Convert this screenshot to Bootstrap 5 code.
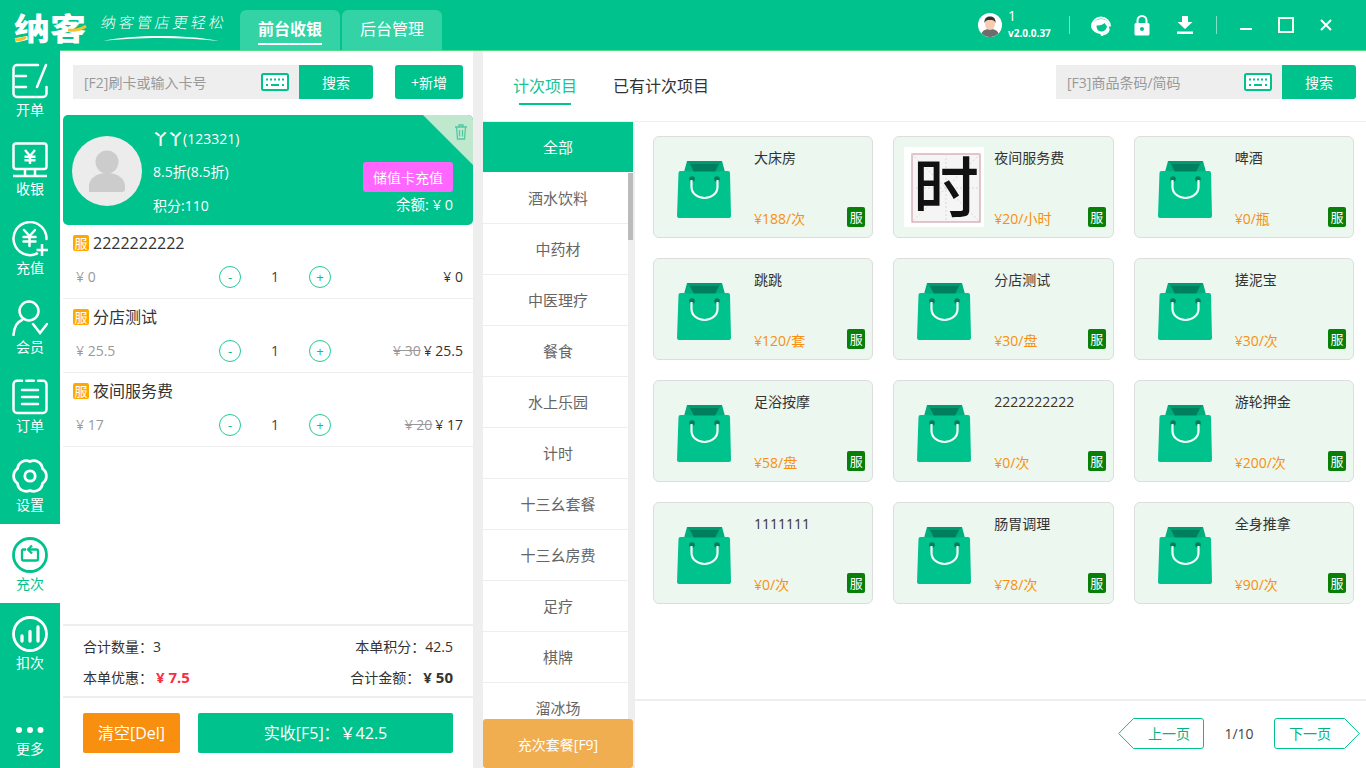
<!DOCTYPE html>
<html lang="zh">
<head>
<meta charset="utf-8">
<title>纳客</title>
<link href="https://cdn.jsdelivr.net/npm/bootstrap@5.3.0/dist/css/bootstrap.min.css" rel="stylesheet">
<style>
:root{--g:#00c28c;}
html,body{height:768px;overflow:hidden;}
body{font-family:"Open Sans","Noto Sans CJK SC",sans-serif;font-size:14px;color:#333;background:#fff;}
.top-bar{height:51px;background:var(--g);border-bottom:1px solid #4fdc8e;color:#fff;}
.brand{width:240px;height:50px;position:relative;}
.brand-name{position:absolute;left:14px;top:6px;font-size:36px;line-height:40px;font-weight:900;color:#fff;transform:scaleY(.86);transform-origin:50% 100%;}
.brand-accent{position:absolute;left:14px;top:24px;}
.brand-slogan{position:absolute;left:101px;top:11px;font-size:15px;line-height:22px;letter-spacing:3px;transform:skewX(-10deg);font-weight:300;white-space:nowrap;}
.brand-curve{position:absolute;left:102px;top:34px;}
.top-tab{width:100px;height:40px;margin-top:10px;margin-right:2px;background:#33d3a5;border-radius:6px 6px 0 0;font-size:16px;text-align:center;line-height:38px;color:#fff;}
.top-tab span{display:inline-block;height:35px;}
.top-tab.on span{font-weight:700;border-bottom:2px solid #fff;}
.user-box{margin-left:auto;}
.u-avatar{width:24px;height:24px;margin-right:6px;}
.u-name{width:61px;line-height:1;}
.u-name b{display:block;font-weight:400;font-size:14px;margin-bottom:5px;margin-top:-4px;}
.u-name i{display:block;font-style:normal;font-weight:700;font-size:10px;}
.v-sep{width:1px;height:18px;background:#7fe0c5;}
.t-ico{width:22px;height:22px;display:block;}
.i-head{margin-left:20px;}
.i-lock{margin-left:19px;}
.i-down{margin-left:21px;}
.sep2{margin-left:20px;}
.i-min{margin-left:23px;margin-top:7px;}
.i-max{margin-left:26px;}
.i-close{margin-left:26px;margin-right:34px;}
.side{width:60px;background:var(--g);color:#fff;margin-top:-1px;position:relative;}
.side-item{height:79px;padding-top:13px;text-align:center;line-height:20px;font-size:14px;}
.side-item svg{display:block;margin:0 auto 1px;width:36px;height:36px;}
.side-item.on{background:#fff;color:var(--g);}
.side-more{height:60px;margin-top:auto;padding-top:16px;text-align:center;line-height:20px;}
.side-more svg{display:block;margin:0 auto 3px;width:32px;height:12px;}
.work{height:717px;}
.left-pane{width:410px;margin-left:3px;background:#fff;}
.search-wrap{height:34px;margin:14px 10px 0;}
.search-box{width:300px;height:34px;}
.search-field{flex:1;background:#eee;height:34px;padding:0 10px 0 11px;}
.search-field input{flex:1;min-width:0;border:0;outline:0;background:transparent;font-size:14px;color:#888;padding:0;}
.search-field input::placeholder{color:#999;opacity:1;}
.kb{width:28px;height:18px;flex:none;}
.g-btn{background:var(--g);color:#fff;font-size:14px;border:0;border-radius:0 3px 3px 0;width:74px;height:34px;padding:0;}
.add-btn{width:68px;border-radius:3px;}
.mem-card{height:110px;margin-top:16px;background:var(--g);border-radius:5px;color:#fff;position:relative;overflow:hidden;padding:0 20px 0 9px;}
.mem-photo{width:70px;height:70px;flex:none;margin-top:21px;margin-right:11px;}
.mem-info{padding-top:12px;line-height:22px;}
.mem-info div{height:34px;}
.mem-name b{font-size:15px;font-weight:700;}
.mem-right{margin-left:auto;padding-top:47px;text-align:right;}
.pink-btn{width:90px;height:30px;background:#ff66ff;color:#fff;border:0;border-radius:3px;padding:0;font-size:14px;display:block;}
.mem-bal{margin-top:3px;line-height:20px;font-size:14.5px;}
.corner{position:absolute;right:0;top:0;width:50px;height:50px;background:#bfe8cf;clip-path:polygon(0 0,100% 0,100% 100%);}
.corner svg{position:absolute;right:5px;top:9px;width:14px;height:16px;}
.ord-row{height:74px;border-bottom:1px solid #eee;padding:8px 10px 0;}
.ord-title{height:20px;line-height:20px;font-size:16px;color:#333;}
.fu-tag{width:16px;height:16px;background:#ffa800;color:#fff;font-size:13px;line-height:16px;text-align:center;border-radius:2px;margin-right:4px;flex:none;}
.ord-line{height:22px;margin-top:13px;line-height:22px;}
.ord-price{width:146px;padding-left:3px;color:#999;}
.rnd{width:22px;height:22px;border:1px solid #1fcb9b;border-radius:50%;color:#00c28c;font-size:13px;line-height:19px;text-align:center;background:#fff;padding:0;flex:none;}
.ord-qty{width:68px;text-align:center;color:#444;}
.ord-total{margin-left:auto;color:#333;}
.ord-total s{color:#999;margin-right:3px;}
.sum-box{height:72px;border-top:2px solid #eee;padding:11px 20px 0;}
.sum-line{height:20px;line-height:20px;margin-bottom:10px;}
.sum-red{color:#f5303f;font-weight:700;margin-left:3px;font-size:15px;}
.sum-bold{font-weight:700;font-size:15px;color:#333;margin-left:3px;}
.act-box{height:72px;border-top:2px solid #eee;padding:15px 20px 15px;}
.act-clear{width:97px;height:40px;background:#f98f0f;color:#fff;font-size:16px;border:0;border-radius:2px;padding:0;}
.act-pay{width:255px;height:40px;margin-left:18px;background:var(--g);color:#fff;font-size:16px;border:0;border-radius:2px;padding:0;}
.gutter{width:10px;background:#eee;}
.right-pane{flex:1;min-width:0;background:#fff;}
.r-head{height:71px;border-bottom:1px solid #eee;padding:0 10px 0 30px;}
.r-tab{font-size:16px;line-height:20px;padding-top:25px;margin-right:36px;color:#333;position:relative;}
.r-tab.on{color:#16c496;}
.r-tab.on::after{content:"";display:block;width:52px;height:2px;margin:7px auto 0;background:var(--g);}
.r-search{margin-top:14px;margin-left:auto;}
.r-body{height:646px;}
.cat-col{width:150px;}
.cat-first{height:50px;background:var(--g);color:#fff;font-size:15px;line-height:50px;text-align:center;}
.cat-scroll{height:547px;margin-top:1px;overflow:hidden;}
.cat-list{width:145px;}
.cat-item{height:51px;line-height:50px;text-align:center;font-size:15px;color:#666;border-bottom:1px solid #eee;flex:none;padding-left:5px;}
.cat-track{width:5px;background:#eee;}
.cat-thumb{height:67px;background:#bbb;}
.cat-foot{height:49px;background:#f0ae50;color:#fff;font-size:14px;line-height:52px;text-align:center;border-radius:3px;border:0;padding:0;}
.gut2{width:2px;background:#eee;}
.goods-col{flex:1;min-width:0;}
.goods-grid{display:grid;grid-template-columns:repeat(3,1fr);grid-auto-rows:102px;gap:20px;padding:14px 12px 0 18px;flex:1;align-content:start;}
.goods{border:1px solid #ddd;border-radius:6px;background:#ebf7ef;display:flex;}
.goods-pic{width:100px;flex:none;padding:23px 0 0 23px;}
.goods-pic svg{display:block;overflow:visible;}
.goods-pic.stamp{padding:10px 0 0 10px;}
.goods-txt{flex:1;min-width:0;padding:11px 7px 10px 0;display:flex;flex-direction:column;}
.goods-name{height:20px;line-height:20px;font-size:14px;color:#333;}
.goods-foot{height:20px;margin-top:auto;}
.goods-price{color:#f98f0f;font-size:14px;line-height:24px;}
.fu-green{width:18px;height:20px;background:#088008;color:#fff;font-size:13px;line-height:20px;text-align:center;border-radius:2px;}
.pager-bar{height:69px;border-top:2px solid #eee;padding:17px 6px 0 0;}
.pg-btn{width:86px;height:31px;position:relative;background:transparent;border:0;padding:0;color:#00b586;font-size:14px;}
.pg-btn svg{position:absolute;left:0;top:0;}
.pg-btn span{position:relative;}
.pg-next span{padding-right:14px;}
.pg-num{width:70px;text-align:center;line-height:31px;color:#444;font-size:14px;}
</style>
</head>
<body>
<svg width="0" height="0" class="position-absolute">
  <defs>
    <symbol id="bag" viewBox="0 0 54 58">
      <path d="M10 1H45L48 12H7Z" fill="#00ad7d"/>
      <path d="M13 4H42L38 12H17Z" fill="#007f5f"/>
      <path d="M10 1H45L42 4H13Z" fill="#009a70"/>
      <path d="M7 11L17 11.500H38L48 11L51 11A2 2 0 0 1 53 13L54 56A2 2 0 0 1 52 58H2A2 2 0 0 1 0 56L1.500 13A2 2 0 0 1 3.500 11Z" fill="#00c28c"/>
      <circle cx="15" cy="19" r="2.800" fill="#007f5f"/><circle cx="40" cy="19" r="2.800" fill="#007f5f"/>
      <path d="M14.500 20V27A13 11 0 0 0 40.500 27V20" fill="none" stroke="#f2fdf8" stroke-width="2.200"/>
    </symbol>
    <symbol id="kbd" viewBox="0 0 28 18">
      <rect x="1" y="1" width="26" height="16" rx="1.500" fill="#fff" stroke="#00c28c" stroke-width="2"/>
      <path d="M5 6.500H7M9 6.500H11M13 6.500H15M17 6.500H19M21 6.500H23M5 12H7M10 12H18M21 12H23" stroke="#00c28c" stroke-width="2"/>
    </symbol>
    <symbol id="mem" viewBox="0 0 70 70">
      <circle cx="35" cy="35" r="35" fill="#ececec"/>
      <circle cx="35" cy="26" r="11.500" fill="#ccc"/>
      <path d="M17 56V50C17 43 24 37 35 37S53 43 53 50V53A3 3 0 0 1 50 56Z" fill="#ccc"/>
    </symbol>
    <symbol id="pgl" viewBox="0 0 86 31"><path d="M15.500 .5H83A2.500 2.500 0 0 1 85.500 3V28A2.500 2.500 0 0 1 83 30.500H15.500L.7 15.500Z" fill="#fff" stroke="#00c28c"/></symbol>
    <symbol id="pgr" viewBox="0 0 86 31"><path d="M70.500 .5H3A2.500 2.500 0 0 0 .5 3V28A2.500 2.500 0 0 0 3 30.500H70.500L85.300 15.500Z" fill="#fff" stroke="#00c28c"/></symbol>
  </defs>
</svg>

<header class="top-bar d-flex">
  <div class="brand">
    <div class="brand-name">纳客</div>
    <svg class="brand-accent" width="74" height="20" viewBox="0 0 74 20"><path d="M1 16C5 16 9 15 12 13" stroke="#fbc02d" stroke-width="3" fill="none"/><path d="M54 6C60 7 66 6 72 2" stroke="#fbc02d" stroke-width="3" fill="none"/></svg>
    <div class="brand-slogan">纳客管店更轻松</div>
    <svg class="brand-curve" width="118" height="8" viewBox="0 0 118 8"><path d="M1 7C30 1 80 0 117 7C80 3 35 3 1 7Z" fill="#fff"/></svg>
  </div>
  <div class="top-tab on"><span>前台收银</span></div>
  <div class="top-tab"><span>后台管理</span></div>
  <div class="user-box d-flex align-items-center">
    <svg class="u-avatar" viewBox="0 0 24 24"><circle cx="12" cy="12" r="12" fill="#fff"/><path d="M3.500 20.500C5 17 8 16 12 16S19 17 20.500 20.500A12 12 0 0 1 3.500 20.500Z" fill="#6d6d6d"/><ellipse cx="12" cy="11" rx="5" ry="6" fill="#f6cdb0"/><path d="M6.500 10C6 5 9 3.500 12 3.500S18 5 17.500 10C16.500 7.500 15 7 12 7S7.500 7.500 6.500 10Z" fill="#333"/></svg>
    <div class="u-name"><b>1</b><i>v2.0.0.37</i></div>
    <div class="v-sep"></div>
    <svg class="t-ico i-head" viewBox="0 0 22 22"><path d="M2 12.500A9 9 0 0 1 20 12.500" fill="none" stroke="#fff" stroke-width="2"/><path d="M1 12C1 11 5 5 11 5S19 9 19 12V14C19 18 15 20 11 20C6 20 1 16 1 12Z" fill="#fff"/><path d="M6.500 11.500C10 12 13 10.500 14.500 9C15.500 10.500 16.500 11.500 17 12.500C16.500 15.500 14 17.500 11 17.500C8 17.500 6.500 14.500 6.500 11.500Z" fill="#00c28c"/><path d="M19 14.500C19 18 16 20 13 20.500" fill="none" stroke="#fff" stroke-width="1.500"/><circle cx="12" cy="20.500" r="1.500" fill="#fff"/></svg>
    <svg class="t-ico i-lock" viewBox="0 0 22 22"><path d="M6.500 10V6.500A4.500 4.500 0 0 1 15.500 6.500V10" fill="none" stroke="#fff" stroke-width="2"/><rect x="3.500" y="9" width="15" height="12.500" rx="1.500" fill="#fff"/><circle cx="11" cy="15" r="2" fill="#00c28c"/></svg>
    <svg class="t-ico i-down" viewBox="0 0 22 22"><path d="M8 2H14V8H18.500L11 15 3.500 8H8Z" fill="#fff"/><rect x="3" y="17.500" width="16" height="2.500" fill="#fff"/></svg>
    <div class="v-sep sep2"></div>
    <svg class="i-min" width="12" height="2"><rect width="12" height="2" fill="#fff"/></svg>
    <svg class="i-max" width="16" height="16"><rect x="1" y="1" width="14" height="14" fill="none" stroke="#f4fbe9" stroke-width="2"/></svg>
    <svg class="i-close" width="12" height="12"><path d="M1 1L11 11M11 1L1 11" stroke="#fff" stroke-width="2"/></svg>
  </div>
</header>

<div class="work d-flex">
  <nav class="side d-flex flex-column">
    <div class="side-item">
      <svg viewBox="0 0 36 36" fill="none" stroke="#fff" stroke-width="2.500" stroke-linecap="round"><path d="M26 2H5A3.500 3.500 0 0 0 1.500 5.500V30.500A3.500 3.500 0 0 0 5 34H31A3.500 3.500 0 0 0 34.500 30.500V24"/><path d="M4 13H14M4 24H14M34 2L25 24"/></svg>开单
    </div>
    <div class="side-item">
      <svg viewBox="0 0 36 36" fill="none" stroke="#fff" stroke-width="2.500"><rect x="1.500" y="1.500" width="33" height="25.500" rx="2.500"/><path d="M1 34H35M13 27V34M23 27V34"/><path d="M13 8L18 14L23 8M12.500 14.800H23.500M12.500 18.300H23.500M18 14V22" stroke-width="2.400"/></svg>收银
    </div>
    <div class="side-item">
      <svg viewBox="0 0 36 36" fill="none" stroke="#fff" stroke-width="2.500" stroke-linecap="round"><path d="M25 32.500A16.500 16.500 0 1 1 34.500 18"/><path d="M12 9L17.500 15L23 9M11.500 16H23.500M11.500 20.500H23.500M17.500 15V25" stroke-width="2.500"/><path d="M24.500 29H36M30 23V35" stroke-linecap="butt"/></svg>充值
    </div>
    <div class="side-item">
      <svg viewBox="0 0 36 36" fill="none" stroke="#fff" stroke-width="2.500" stroke-linecap="round"><circle cx="17" cy="11" r="9.500"/><path d="M1.500 35C2 27 5 22 10 20M21 24L28 33L35 24"/></svg>会员
    </div>
    <div class="side-item">
      <svg viewBox="0 0 36 36" fill="none" stroke="#fff" stroke-width="2.500" stroke-linecap="round"><path d="M10 1.800H5A3.500 3.500 0 0 0 1.500 5.300V30.500A3.500 3.500 0 0 0 5 34H31A3.500 3.500 0 0 0 34.500 30.500V5.300A3.500 3.500 0 0 0 31 1.800H26"/><rect x="13" y=".5" width="10" height="2.500" rx="1.200" fill="#fff" stroke="none"/><path d="M10 11H26M10 18H26M10 25H26"/></svg>订单
    </div>
    <div class="side-item">
      <svg viewBox="0 0 36 36" fill="none" stroke="#fff" stroke-width="2.800" stroke-linejoin="round"><path d="M18 3.500A8.800 8.800 0 0 1 30.500 10.700A8.800 8.800 0 0 1 30.500 25.300A8.800 8.800 0 0 1 18 32.500A8.800 8.800 0 0 1 5.500 25.300A8.800 8.800 0 0 1 5.500 10.700A8.800 8.800 0 0 1 18 3.500Z"/><circle cx="18" cy="18" r="5.200"/></svg>设置
    </div>
    <div class="side-item on">
      <svg viewBox="0 0 36 36" fill="none" stroke="#00c28c" stroke-width="2.800"><circle cx="18" cy="18" r="16.500"/><path d="M14 12.500H11.500A1.500 1.500 0 0 0 10 14V22A1.500 1.500 0 0 0 11.500 23.500H24.500A1.500 1.500 0 0 0 26 22V14A1.500 1.500 0 0 0 24.500 12.500H17" stroke-width="2.300"/><path d="M20 8.500L16 12.500L20 16.500" stroke-width="2.300"/></svg>充次
    </div>
    <div class="side-item">
      <svg viewBox="0 0 36 36" fill="none" stroke="#fff" stroke-width="2.800"><circle cx="18" cy="18" r="16.500"/><path d="M10 20V25M18 15.500V25M26 11V25" stroke-width="3.300" stroke-linecap="round"/></svg>扣次
    </div>
    <div class="side-more">
      <svg viewBox="0 0 32 12" fill="#fff"><circle cx="5" cy="6" r="3"/><circle cx="16" cy="6" r="3"/><circle cx="26.500" cy="6" r="3"/></svg>更多
    </div>
  </nav>

  <section class="left-pane d-flex flex-column">
    <div class="search-wrap d-flex justify-content-between">
      <div class="search-box d-flex">
        <div class="search-field d-flex align-items-center"><input type="text" placeholder="[F2]刷卡或输入卡号"><svg class="kb"><use href="#kbd"/></svg></div>
        <button class="g-btn">搜索</button>
      </div>
      <button class="g-btn add-btn">+新增</button>
    </div>

    <div class="mem-card d-flex">
      <svg class="mem-photo"><use href="#mem"/></svg>
      <div class="mem-info">
        <div class="mem-name"><b>丫丫</b>(123321)</div>
        <div>8.5折(8.5折)</div>
        <div>积分:110</div>
      </div>
      <div class="mem-right">
        <button class="pink-btn">储值卡充值</button>
        <div class="mem-bal">余额: ¥ 0</div>
      </div>
      <div class="corner"><svg viewBox="0 0 14 16" fill="none" stroke="#52c9a0" stroke-width="1.300"><path d="M1 3H13M5 3V1H9V3M2.500 3L3.500 15H10.500L11.500 3M5.500 6V12.500M8.500 6V12.500"/></svg></div>
    </div>

    <div class="ord-row">
      <div class="ord-title d-flex align-items-center"><span class="fu-tag">服</span>2222222222</div>
      <div class="ord-line d-flex"><span class="ord-price">¥ 0</span><button class="rnd">-</button><span class="ord-qty">1</span><button class="rnd">+</button><span class="ord-total">¥ 0</span></div>
    </div>
    <div class="ord-row">
      <div class="ord-title d-flex align-items-center"><span class="fu-tag">服</span>分店测试</div>
      <div class="ord-line d-flex"><span class="ord-price">¥ 25.5</span><button class="rnd">-</button><span class="ord-qty">1</span><button class="rnd">+</button><span class="ord-total"><s>¥ 30</s>¥ 25.5</span></div>
    </div>
    <div class="ord-row">
      <div class="ord-title d-flex align-items-center"><span class="fu-tag">服</span>夜间服务费</div>
      <div class="ord-line d-flex"><span class="ord-price">¥ 17</span><button class="rnd">-</button><span class="ord-qty">1</span><button class="rnd">+</button><span class="ord-total"><s>¥ 20</s>¥ 17</span></div>
    </div>

    <div class="sum-box mt-auto">
      <div class="sum-line d-flex justify-content-between"><span>合计数量：3</span><span>本单积分：42.5</span></div>
      <div class="sum-line d-flex justify-content-between"><span>本单优惠：<span class="sum-red">¥ 7.5</span></span><span>合计金额：<span class="sum-bold">¥ 50</span></span></div>
    </div>
    <div class="act-box d-flex">
      <button class="act-clear">清空[Del]</button>
      <button class="act-pay">实收[F5]：￥42.5</button>
    </div>
  </section>

  <div class="gutter"></div>

  <section class="right-pane d-flex flex-column">
    <div class="r-head d-flex">
      <div class="r-tab on">计次项目</div>
      <div class="r-tab">已有计次项目</div>
      <div class="search-box d-flex r-search">
        <div class="search-field d-flex align-items-center"><input type="text" placeholder="[F3]商品条码/简码"><svg class="kb"><use href="#kbd"/></svg></div>
        <button class="g-btn">搜索</button>
      </div>
    </div>
    <div class="r-body d-flex">
      <div class="cat-col d-flex flex-column">
        <div class="cat-first">全部</div>
        <div class="cat-scroll d-flex">
          <div class="cat-list d-flex flex-column">
            <div class="cat-item">酒水饮料</div>
            <div class="cat-item">中药材</div>
            <div class="cat-item">中医理疗</div>
            <div class="cat-item">餐食</div>
            <div class="cat-item">水上乐园</div>
            <div class="cat-item">计时</div>
            <div class="cat-item">十三幺套餐</div>
            <div class="cat-item">十三幺房费</div>
            <div class="cat-item">足疗</div>
            <div class="cat-item">棋牌</div>
            <div class="cat-item">溜冰场</div>
          </div>
          <div class="cat-track"><div class="cat-thumb"></div></div>
        </div>
        <button class="cat-foot">充次套餐[F9]</button>
      </div>
      <div class="gut2"></div>
      <div class="goods-col d-flex flex-column">
        <div class="goods-grid">
          <div class="goods"><div class="goods-pic"><svg width="54" height="58"><use href="#bag"/></svg></div><div class="goods-txt"><div class="goods-name">大床房</div><div class="goods-foot d-flex justify-content-between"><span class="goods-price">¥188/次</span><span class="fu-green">服</span></div></div></div>
          <div class="goods"><div class="goods-pic stamp"><svg width="80" height="80" viewBox="0 0 80 80"><rect width="80" height="80" fill="#fff"/><rect x="8" y="7" width="68" height="68" fill="#f5f5f5" stroke="#c98f9c"/><path d="M8 7L76 75M76 7L8 75M42 7V75M8 41H76" stroke="#d8d8d8" stroke-dasharray="2 2"/><text x="42" y="65" font-size="66" font-weight="500" text-anchor="middle" fill="#111" font-family="Noto Sans CJK SC">时</text></svg></div><div class="goods-txt"><div class="goods-name">夜间服务费</div><div class="goods-foot d-flex justify-content-between"><span class="goods-price">¥20/小时</span><span class="fu-green">服</span></div></div></div>
          <div class="goods"><div class="goods-pic"><svg width="54" height="58"><use href="#bag"/></svg></div><div class="goods-txt"><div class="goods-name">啤酒</div><div class="goods-foot d-flex justify-content-between"><span class="goods-price">¥0/瓶</span><span class="fu-green">服</span></div></div></div>

          <div class="goods"><div class="goods-pic"><svg width="54" height="58"><use href="#bag"/></svg></div><div class="goods-txt"><div class="goods-name">跳跳</div><div class="goods-foot d-flex justify-content-between"><span class="goods-price">¥120/套</span><span class="fu-green">服</span></div></div></div>
          <div class="goods"><div class="goods-pic"><svg width="54" height="58"><use href="#bag"/></svg></div><div class="goods-txt"><div class="goods-name">分店测试</div><div class="goods-foot d-flex justify-content-between"><span class="goods-price">¥30/盘</span><span class="fu-green">服</span></div></div></div>
          <div class="goods"><div class="goods-pic"><svg width="54" height="58"><use href="#bag"/></svg></div><div class="goods-txt"><div class="goods-name">搓泥宝</div><div class="goods-foot d-flex justify-content-between"><span class="goods-price">¥30/次</span><span class="fu-green">服</span></div></div></div>

          <div class="goods"><div class="goods-pic"><svg width="54" height="58"><use href="#bag"/></svg></div><div class="goods-txt"><div class="goods-name">足浴按摩</div><div class="goods-foot d-flex justify-content-between"><span class="goods-price">¥58/盘</span><span class="fu-green">服</span></div></div></div>
          <div class="goods"><div class="goods-pic"><svg width="54" height="58"><use href="#bag"/></svg></div><div class="goods-txt"><div class="goods-name">2222222222</div><div class="goods-foot d-flex justify-content-between"><span class="goods-price">¥0/次</span><span class="fu-green">服</span></div></div></div>
          <div class="goods"><div class="goods-pic"><svg width="54" height="58"><use href="#bag"/></svg></div><div class="goods-txt"><div class="goods-name">游轮押金</div><div class="goods-foot d-flex justify-content-between"><span class="goods-price">¥200/次</span><span class="fu-green">服</span></div></div></div>

          <div class="goods"><div class="goods-pic"><svg width="54" height="58"><use href="#bag"/></svg></div><div class="goods-txt"><div class="goods-name">1111111</div><div class="goods-foot d-flex justify-content-between"><span class="goods-price">¥0/次</span><span class="fu-green">服</span></div></div></div>
          <div class="goods"><div class="goods-pic"><svg width="54" height="58"><use href="#bag"/></svg></div><div class="goods-txt"><div class="goods-name">肠胃调理</div><div class="goods-foot d-flex justify-content-between"><span class="goods-price">¥78/次</span><span class="fu-green">服</span></div></div></div>
          <div class="goods"><div class="goods-pic"><svg width="54" height="58"><use href="#bag"/></svg></div><div class="goods-txt"><div class="goods-name">全身推拿</div><div class="goods-foot d-flex justify-content-between"><span class="goods-price">¥90/次</span><span class="fu-green">服</span></div></div></div>
        </div>
        <div class="pager-bar d-flex justify-content-end">
          <button class="pg-btn"><svg width="86" height="31"><use href="#pgl"/></svg><span class="ps-3">上一页</span></button>
          <span class="pg-num">1/10</span>
          <button class="pg-btn pg-next"><svg width="86" height="31"><use href="#pgr"/></svg><span>下一页</span></button>
        </div>
      </div>
    </div>
  </section>
</div>
<script src="https://cdn.jsdelivr.net/npm/bootstrap@5.3.0/dist/js/bootstrap.bundle.min.js"></script>
</body>
</html>
